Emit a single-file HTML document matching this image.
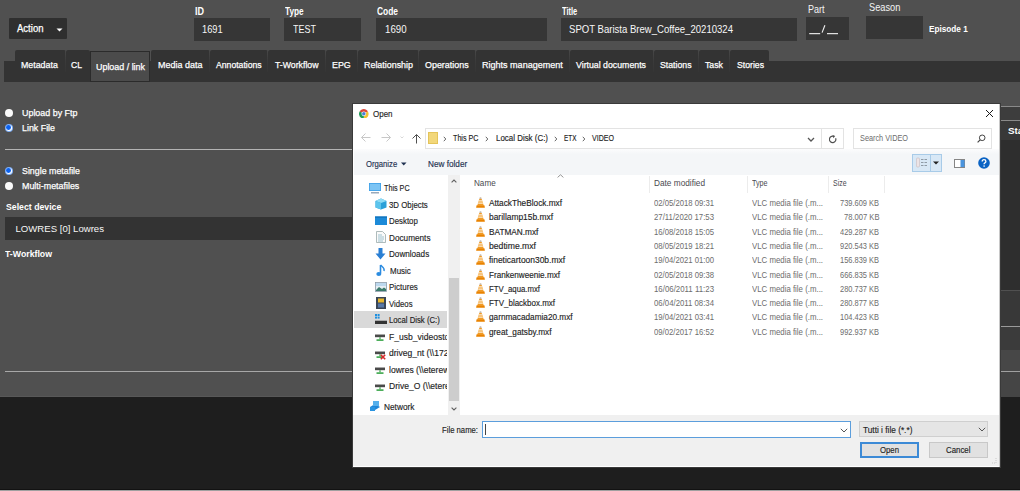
<!DOCTYPE html>
<html><head><meta charset="utf-8"><style>
html,body{margin:0;padding:0;width:1020px;height:491px;overflow:hidden;background:#505050}
body>div,body>svg,body div,body svg{position:absolute}
.t{white-space:pre;font-family:"Liberation Sans",sans-serif;transform-origin:0 0}
</style></head><body>
<div style="left:0px;top:0px;width:1020px;height:397px;background:#505050"></div>
<div style="left:0px;top:397px;width:1020px;height:94px;background:#1e1e1e"></div>
<div style="left:0px;top:396px;width:353px;height:1px;background:#585858"></div>
<div style="left:0px;top:489px;width:1020px;height:1px;background:#121212"></div>
<div style="left:0px;top:490px;width:1020px;height:1px;background:#a0a0a0"></div>
<div style="left:9px;top:18px;width:58px;height:21px;background:#2f2f2f;border-radius:1px"></div>
<div class="t" style="left:16.50px;top:24.00px;font-size:10.2px;line-height:10.2px;font-weight:400;color:#fff;transform:scaleX(0.9355);-webkit-text-stroke:0.25px #fff;">Action</div>
<svg style="left:56px;top:28px" width="7" height="4"><path d="M0.5 0.5H6.5L3.5 3.5Z" fill="#fff"/></svg>
<div style="left:194px;top:18px;width:76px;height:23px;background:#363636"></div>
<div class="t" style="left:194.50px;top:7.00px;font-size:10.2px;line-height:10.2px;font-weight:700;color:#fff;transform:scaleX(0.8834);">ID</div>
<div class="t" style="left:202.00px;top:25.00px;font-size:10.2px;line-height:10.2px;font-weight:400;color:#f6f6f6;transform:scaleX(0.9130);">1691</div>
<div style="left:284px;top:18px;width:77px;height:23px;background:#363636"></div>
<div class="t" style="left:284.50px;top:7.00px;font-size:10.2px;line-height:10.2px;font-weight:700;color:#fff;transform:scaleX(0.8076);">Type</div>
<div class="t" style="left:293.30px;top:25.00px;font-size:10.2px;line-height:10.2px;font-weight:400;color:#f6f6f6;transform:scaleX(0.8830);">TEST</div>
<div style="left:376px;top:18px;width:171px;height:23px;background:#363636"></div>
<div class="t" style="left:376.50px;top:7.00px;font-size:10.2px;line-height:10.2px;font-weight:700;color:#fff;transform:scaleX(0.8245);">Code</div>
<div class="t" style="left:384.70px;top:25.00px;font-size:10.2px;line-height:10.2px;font-weight:400;color:#f6f6f6;transform:scaleX(0.9527);">1690</div>
<div style="left:561px;top:18px;width:236px;height:23px;background:#363636"></div>
<div class="t" style="left:561.50px;top:7.00px;font-size:10.2px;line-height:10.2px;font-weight:700;color:#fff;transform:scaleX(0.7368);">Title</div>
<div class="t" style="left:569.20px;top:25.00px;font-size:10.2px;line-height:10.2px;font-weight:400;color:#f6f6f6;transform:scaleX(0.9392);">SPOT Barista Brew_Coffee_20210324</div>
<div style="left:806px;top:17px;width:43px;height:23px;background:#363636"></div>
<div class="t" style="left:807.50px;top:5.00px;font-size:10.2px;line-height:10.2px;font-weight:400;color:#f4f4f4;transform:scaleX(0.8829);">Part</div>
<svg style="left:808px;top:24px" width="32" height="12"><rect x="1.2" y="9.1" width="11" height="1.1" fill="#f2f2f2"/><rect x="19" y="9.1" width="11" height="1.1" fill="#f2f2f2"/><path d="M14.1 8.6L16.9 1.2" stroke="#f2f2f2" stroke-width="1.1"/></svg>
<div style="left:866px;top:16px;width:57px;height:23px;background:#363636"></div>
<div class="t" style="left:868.60px;top:3.00px;font-size:10.2px;line-height:10.2px;font-weight:400;color:#f4f4f4;transform:scaleX(0.9085);">Season</div>
<div class="t" style="left:929.00px;top:24.00px;font-size:9.4px;line-height:9.4px;font-weight:700;color:#fff;transform:scaleX(0.8759);">Episode 1</div>
<div style="left:4px;top:61px;width:1016px;height:21px;background:#333"></div>
<div style="left:15px;top:50px;width:51px;height:32px;background:#333;border-radius:2px 2px 0 0"></div>
<div style="left:65px;top:50px;width:1px;height:22px;background:linear-gradient(#484848,#3a3a3a 50%,#353535)"></div>
<div class="t" style="left:21.00px;top:60.00px;font-size:9.6px;line-height:9.6px;font-weight:400;color:#fff;transform:scaleX(0.9196);-webkit-text-stroke:0.25px #fff;">Metadata</div>
<div style="left:66px;top:50px;width:24px;height:32px;background:#333;border-radius:2px 2px 0 0"></div>
<div class="t" style="left:71.00px;top:60.00px;font-size:9.6px;line-height:9.6px;font-weight:400;color:#fff;transform:scaleX(0.8968);-webkit-text-stroke:0.25px #fff;">CL</div>
<div style="left:90px;top:51px;width:60px;height:31px;background:#4b4b4b;box-sizing:border-box;border:1px solid #2b2b2b;border-bottom-width:1.5px"></div>
<div class="t" style="left:95.50px;top:62.00px;font-size:9.6px;line-height:9.6px;font-weight:400;color:#fff;transform:scaleX(0.9281);-webkit-text-stroke:0.25px #fff;">Upload / link</div>
<div style="left:151px;top:50px;width:59px;height:32px;background:#333;border-radius:2px 2px 0 0"></div>
<div style="left:209px;top:50px;width:1px;height:22px;background:linear-gradient(#484848,#3a3a3a 50%,#353535)"></div>
<div class="t" style="left:157.60px;top:60.00px;font-size:9.6px;line-height:9.6px;font-weight:400;color:#fff;transform:scaleX(0.9354);-webkit-text-stroke:0.25px #fff;">Media data</div>
<div style="left:210px;top:50px;width:58px;height:32px;background:#333;border-radius:2px 2px 0 0"></div>
<div style="left:267px;top:50px;width:1px;height:22px;background:linear-gradient(#484848,#3a3a3a 50%,#353535)"></div>
<div class="t" style="left:215.50px;top:60.00px;font-size:9.6px;line-height:9.6px;font-weight:400;color:#fff;transform:scaleX(0.9019);-webkit-text-stroke:0.25px #fff;">Annotations</div>
<div style="left:268px;top:50px;width:58px;height:32px;background:#333;border-radius:2px 2px 0 0"></div>
<div style="left:325px;top:50px;width:1px;height:22px;background:linear-gradient(#484848,#3a3a3a 50%,#353535)"></div>
<div class="t" style="left:274.90px;top:60.00px;font-size:9.6px;line-height:9.6px;font-weight:400;color:#fff;transform:scaleX(0.9101);-webkit-text-stroke:0.25px #fff;">T-Workflow</div>
<div style="left:326px;top:50px;width:32px;height:32px;background:#333;border-radius:2px 2px 0 0"></div>
<div style="left:357px;top:50px;width:1px;height:22px;background:linear-gradient(#484848,#3a3a3a 50%,#353535)"></div>
<div class="t" style="left:331.80px;top:60.00px;font-size:9.6px;line-height:9.6px;font-weight:400;color:#fff;transform:scaleX(0.9277);-webkit-text-stroke:0.25px #fff;">EPG</div>
<div style="left:358px;top:50px;width:61px;height:32px;background:#333;border-radius:2px 2px 0 0"></div>
<div style="left:418px;top:50px;width:1px;height:22px;background:linear-gradient(#484848,#3a3a3a 50%,#353535)"></div>
<div class="t" style="left:363.60px;top:60.00px;font-size:9.6px;line-height:9.6px;font-weight:400;color:#fff;transform:scaleX(0.9278);-webkit-text-stroke:0.25px #fff;">Relationship</div>
<div style="left:419px;top:50px;width:57px;height:32px;background:#333;border-radius:2px 2px 0 0"></div>
<div style="left:475px;top:50px;width:1px;height:22px;background:linear-gradient(#484848,#3a3a3a 50%,#353535)"></div>
<div class="t" style="left:425.40px;top:60.00px;font-size:9.6px;line-height:9.6px;font-weight:400;color:#fff;transform:scaleX(0.9289);-webkit-text-stroke:0.25px #fff;">Operations</div>
<div style="left:476px;top:50px;width:94px;height:32px;background:#333;border-radius:2px 2px 0 0"></div>
<div style="left:569px;top:50px;width:1px;height:22px;background:linear-gradient(#484848,#3a3a3a 50%,#353535)"></div>
<div class="t" style="left:481.80px;top:60.00px;font-size:9.6px;line-height:9.6px;font-weight:400;color:#fff;transform:scaleX(0.9411);-webkit-text-stroke:0.25px #fff;">Rights management</div>
<div style="left:570px;top:50px;width:84px;height:32px;background:#333;border-radius:2px 2px 0 0"></div>
<div style="left:653px;top:50px;width:1px;height:22px;background:linear-gradient(#484848,#3a3a3a 50%,#353535)"></div>
<div class="t" style="left:576.00px;top:60.00px;font-size:9.6px;line-height:9.6px;font-weight:400;color:#fff;transform:scaleX(0.9135);-webkit-text-stroke:0.25px #fff;">Virtual documents</div>
<div style="left:654px;top:50px;width:45px;height:32px;background:#333;border-radius:2px 2px 0 0"></div>
<div style="left:698px;top:50px;width:1px;height:22px;background:linear-gradient(#484848,#3a3a3a 50%,#353535)"></div>
<div class="t" style="left:660.00px;top:60.00px;font-size:9.6px;line-height:9.6px;font-weight:400;color:#fff;transform:scaleX(0.9114);-webkit-text-stroke:0.25px #fff;">Stations</div>
<div style="left:699px;top:50px;width:31px;height:32px;background:#333;border-radius:2px 2px 0 0"></div>
<div style="left:729px;top:50px;width:1px;height:22px;background:linear-gradient(#484848,#3a3a3a 50%,#353535)"></div>
<div class="t" style="left:705.00px;top:60.00px;font-size:9.6px;line-height:9.6px;font-weight:400;color:#fff;transform:scaleX(0.9121);-webkit-text-stroke:0.25px #fff;">Task</div>
<div style="left:730px;top:50px;width:39px;height:32px;background:#333;border-radius:2px 2px 0 0"></div>
<div class="t" style="left:736.50px;top:60.00px;font-size:9.6px;line-height:9.6px;font-weight:400;color:#fff;transform:scaleX(0.9042);-webkit-text-stroke:0.25px #fff;">Stories</div>
<div style="left:4.700000000000001px;top:108.5px;width:8.2px;height:8.2px;border-radius:50%;background:#fafafa"></div>
<div class="t" style="left:22.40px;top:109.00px;font-size:9.2px;line-height:9.2px;font-weight:400;color:#fff;transform:scaleX(0.9702);-webkit-text-stroke:0.25px #fff;">Upload by Ftp</div>
<div style="left:4.700000000000001px;top:123.7px;width:8.2px;height:8.2px;border-radius:50%;background:#7fb0f8"></div>
<div style="left:5.500000000000001px;top:124.5px;width:6.6px;height:6.6px;border-radius:50%;background:#fff"></div>
<div style="left:6.4px;top:125.39999999999999px;width:4.8px;height:4.8px;border-radius:50%;background:#0b62f0"></div>
<div class="t" style="left:22.40px;top:124.00px;font-size:9.2px;line-height:9.2px;font-weight:400;color:#fff;transform:scaleX(0.9644);-webkit-text-stroke:0.25px #fff;">Link File</div>
<div style="left:5px;top:149px;width:348px;height:1px;background:#b4b4b4"></div>
<div style="left:4.700000000000001px;top:166.70000000000002px;width:8.2px;height:8.2px;border-radius:50%;background:#7fb0f8"></div>
<div style="left:5.500000000000001px;top:167.5px;width:6.6px;height:6.6px;border-radius:50%;background:#fff"></div>
<div style="left:6.4px;top:168.4px;width:4.8px;height:4.8px;border-radius:50%;background:#0b62f0"></div>
<div class="t" style="left:22.40px;top:167.00px;font-size:9.2px;line-height:9.2px;font-weight:400;color:#fff;transform:scaleX(0.9624);-webkit-text-stroke:0.25px #fff;">Single metafile</div>
<div style="left:4.700000000000001px;top:181.8px;width:8.2px;height:8.2px;border-radius:50%;background:#fafafa"></div>
<div class="t" style="left:22.40px;top:182.00px;font-size:9.2px;line-height:9.2px;font-weight:400;color:#fff;transform:scaleX(0.9673);-webkit-text-stroke:0.25px #fff;">Multi-metafiles</div>
<div class="t" style="left:5.50px;top:203.00px;font-size:9.2px;line-height:9.2px;font-weight:700;color:#fff;transform:scaleX(0.9496);">Select device</div>
<div style="left:5px;top:217px;width:348px;height:23px;background:#333"></div>
<div class="t" style="left:15.50px;top:224.00px;font-size:9.6px;line-height:9.6px;font-weight:400;color:#f6f6f6;">LOWRES [0] Lowres</div>
<div class="t" style="left:5.00px;top:250.00px;font-size:9.2px;line-height:9.2px;font-weight:700;color:#fff;transform:scaleX(0.9525);">T-Workflow</div>
<div style="left:5px;top:371px;width:348px;height:1px;background:#a8a8a8"></div>
<div style="left:990px;top:106px;width:30px;height:1px;background:#8a8a8a"></div>
<div style="left:990px;top:107px;width:30px;height:14px;background:#3d3d3d"></div>
<div style="left:990px;top:120px;width:30px;height:1px;background:#8a8a8a"></div>
<div style="left:990px;top:121px;width:30px;height:19px;background:#383838"></div>
<div class="t" style="left:1008.00px;top:127.00px;font-size:8.6px;line-height:8.6px;font-weight:700;color:#fff;transform:scaleX(1.1422);">Status</div>
<div style="left:990px;top:140px;width:30px;height:150px;background:#2e2e2e"></div>
<div style="left:990px;top:290px;width:30px;height:1px;background:#505050"></div>
<div style="left:990px;top:291px;width:30px;height:35px;background:#383838"></div>
<div style="left:990px;top:326px;width:30px;height:1px;background:#9a9a9a"></div>
<div style="left:990px;top:327px;width:30px;height:23px;background:#3b3b3b"></div>
<div style="left:990px;top:350px;width:30px;height:21px;background:#474747"></div>
<div style="left:990px;top:371px;width:30px;height:1px;background:#a0a0a0"></div>
<div style="left:990px;top:372px;width:30px;height:25px;background:#454545"></div>
<div style="left:353px;top:104px;width:647px;height:363px;background:#fff;box-shadow:0 0 0 1px #3a3a3a"></div>
<div style="left:999px;top:104px;width:1px;height:363px;background:#c8c8c8"></div>
<svg style="left:359px;top:108.8px" width="9.6" height="9.6" viewBox="0 0 20 20"><path d="M10 10L1.34 5A10 10 0 0 1 18.66 5Z" fill="#d9483b"/><path d="M10 10L18.66 5A10 10 0 0 1 10 20Z" fill="#f2c232"/><path d="M10 10L10 20A10 10 0 0 1 1.34 5Z" fill="#1f9a56"/><circle cx="10" cy="10" r="4.8" fill="#fff"/><circle cx="10" cy="10" r="3.7" fill="#4a7fd6"/></svg>
<div class="t" style="left:372.80px;top:110.00px;font-size:9px;line-height:9px;font-weight:400;color:#1e1e1e;transform:scaleX(0.8851);-webkit-text-stroke:0.15px #1e1e1e;">Open</div>
<svg style="left:986px;top:110px" width="7" height="7"><path d="M0 0L7 7M7 0L0 7" stroke="#1a1a1a" stroke-width="1"/></svg>
<svg style="left:361px;top:133px" width="10" height="9"><path d="M0.5 4.5H9.5M4.5 0.5L0.5 4.5L4.5 8.5" stroke="#c8c8c8" fill="none" stroke-width="1"/></svg>
<svg style="left:381px;top:133px" width="10" height="9"><path d="M0.5 4.5H9.5M5.5 0.5L9.5 4.5L5.5 8.5" stroke="#c8c8c8" fill="none" stroke-width="1"/></svg>
<svg style="left:400px;top:136px" width="4" height="3"><path d="M0.5 0.5L2 2L3.5 0.5" stroke="#d8d8d8" fill="none"/></svg>
<svg style="left:412px;top:134px" width="9" height="10"><path d="M4.5 9.5V0.8M0.5 4.5L4.5 0.5L8.5 4.5" stroke="#505050" fill="none" stroke-width="1"/></svg>
<div style="left:425px;top:128px;width:419px;height:21px;box-sizing:border-box;border:1px solid #e3e3e3;background:#fff"></div>
<div style="left:821px;top:129px;width:1px;height:19px;background:#e3e3e3"></div>
<svg style="left:428px;top:132px" width="10" height="12"><rect x="0.5" y="0.5" width="9" height="11" fill="#f2d77a" stroke="#e4c45a"/></svg>
<svg style="left:443.0px;top:136px" width="4" height="6"><path d="M0.8 0.8L2.8 3L0.8 5.2" stroke="#555" fill="none" stroke-width="0.9"/></svg>
<svg style="left:485.0px;top:136px" width="4" height="6"><path d="M0.8 0.8L2.8 3L0.8 5.2" stroke="#555" fill="none" stroke-width="0.9"/></svg>
<svg style="left:553.8px;top:136px" width="4" height="6"><path d="M0.8 0.8L2.8 3L0.8 5.2" stroke="#555" fill="none" stroke-width="0.9"/></svg>
<svg style="left:581.5px;top:136px" width="4" height="6"><path d="M0.8 0.8L2.8 3L0.8 5.2" stroke="#555" fill="none" stroke-width="0.9"/></svg>
<div class="t" style="left:453.30px;top:134.00px;font-size:9px;line-height:9px;font-weight:400;color:#1e1e1e;transform:scaleX(0.7965);-webkit-text-stroke:0.15px #1e1e1e;">This PC</div>
<div class="t" style="left:495.50px;top:134.00px;font-size:9px;line-height:9px;font-weight:400;color:#1e1e1e;transform:scaleX(0.8811);-webkit-text-stroke:0.15px #1e1e1e;">Local Disk (C:)</div>
<div class="t" style="left:563.50px;top:134.00px;font-size:9px;line-height:9px;font-weight:400;color:#1e1e1e;transform:scaleX(0.7079);-webkit-text-stroke:0.15px #1e1e1e;">ETX</div>
<div class="t" style="left:592.00px;top:134.00px;font-size:9px;line-height:9px;font-weight:400;color:#1e1e1e;transform:scaleX(0.7853);-webkit-text-stroke:0.15px #1e1e1e;">VIDEO</div>
<svg style="left:807px;top:136.5px" width="8" height="5"><path d="M1 1L4 4L7 1" stroke="#555" fill="none" stroke-width="1.3"/></svg>
<svg style="left:829px;top:134.5px" width="9" height="9"><path d="M6.6 3.2A3.2 3.2 0 1 1 4.5 1.3" stroke="#505050" fill="none" stroke-width="1.2"/><path d="M3.6 0L6.2 1.1L4.4 3.2Z" fill="#505050"/></svg>
<div style="left:853px;top:128px;width:139px;height:21px;box-sizing:border-box;border:1px solid #e3e3e3;background:#fff"></div>
<div class="t" style="left:859.80px;top:134.00px;font-size:9px;line-height:9px;font-weight:400;color:#6d6d6d;transform:scaleX(0.8131);">Search VIDEO</div>
<svg style="left:977px;top:134px" width="9" height="9"><circle cx="5.2" cy="3.8" r="2.8" stroke="#444" fill="none" stroke-width="1"/><path d="M3.2 5.8L0.6 8.4" stroke="#444" stroke-width="1.2"/></svg>
<div style="left:354px;top:149px;width:645px;height:26px;background:linear-gradient(#fcfcfd,#f4f6f8 20%,#f4f6f8)"></div>
<div class="t" style="left:365.80px;top:160.00px;font-size:9px;line-height:9px;font-weight:400;color:#1e3050;transform:scaleX(0.8541);-webkit-text-stroke:0.15px #1e3050;">Organize</div>
<svg style="left:401px;top:161.5px" width="6" height="4"><path d="M0 0.5H5.5L2.75 3.5Z" fill="#1e3050"/></svg>
<div class="t" style="left:427.80px;top:160.00px;font-size:9px;line-height:9px;font-weight:400;color:#1e3050;transform:scaleX(0.9110);-webkit-text-stroke:0.15px #1e3050;">New folder</div>
<div style="left:912px;top:154px;width:30px;height:18px;box-sizing:border-box;border:1px solid #a8cbe8;background:#d8e8f6"></div>
<div style="left:930px;top:155px;width:1px;height:16px;background:#a8cbe8"></div>
<svg style="left:916px;top:157px" width="12" height="11"><rect x="0.5" y="1" width="3" height="9" rx="1" fill="#ece4e6" stroke="#cbbcc0" stroke-width="0.6"/><path d="M5 2.5H7.5M8.5 2.5H11M5 5.5H7.5M8.5 5.5H11M5 8.5H7.5M8.5 8.5H11" stroke="#8f9ba6" stroke-width="1"/></svg>
<svg style="left:933px;top:161px" width="6" height="4"><path d="M0 0.5H6L3 3.5Z" fill="#222"/></svg>
<svg style="left:954px;top:159px" width="11" height="9"><rect x="0.5" y="0.5" width="10" height="8" fill="#fff" stroke="#858585"/><rect x="6.5" y="1" width="4" height="7" fill="#4a94de"/></svg>
<svg style="left:978px;top:157px" width="12" height="12" viewBox="0 0 12 12"><circle cx="6" cy="6" r="5.8" fill="#0a63c4"/><path d="M4.2 4.6C4.2 3.4 5 2.7 6 2.7C7.1 2.7 7.9 3.4 7.9 4.4C7.9 5.5 6.5 5.7 6.1 6.7V7.3" stroke="#fff" stroke-width="1.3" fill="none"/><circle cx="6.1" cy="9.1" r="0.8" fill="#fff"/></svg>
<div style="left:448px;top:175px;width:12px;height:240px;background:#f0f0f0"></div>
<div style="left:449px;top:278px;width:10px;height:123px;background:#cdcdcd"></div>
<svg style="left:451px;top:178.5px" width="6" height="4"><path d="M0.6 3.4L3 1L5.4 3.4" stroke="#606060" fill="none" stroke-width="1.1"/></svg>
<svg style="left:451px;top:407px" width="6" height="4"><path d="M0.6 0.6L3 3L5.4 0.6" stroke="#606060" fill="none" stroke-width="1.1"/></svg>
<div style="left:354px;top:311px;width:93px;height:17px;background:#d9d9d9"></div>
<div class="t" style="left:384.40px;top:184.00px;font-size:9px;line-height:9px;font-weight:400;color:#1e1e1e;transform:scaleX(0.7996);-webkit-text-stroke:0.15px #1e1e1e;">This PC</div>
<svg style="left:369px;top:182.5px" width="12" height="11"><rect x="0" y="0" width="12" height="8" fill="#3ea0e8"/><rect x="0.8" y="0.8" width="10.4" height="6.4" fill="#7cc4f4"/><rect x="2" y="9" width="8" height="1.5" fill="#9ab"/></svg>
<div class="t" style="left:389.20px;top:201.00px;font-size:9px;line-height:9px;font-weight:400;color:#1e1e1e;transform:scaleX(0.8713);-webkit-text-stroke:0.15px #1e1e1e;">3D Objects</div>
<svg style="left:374.5px;top:198.3px" width="12" height="12"><path d="M6 0.5L11.5 3V9.5L6 11.5L0.5 9.5V3Z" fill="#2aa0d8"/><path d="M6 0.5L11.5 3L6 5L0.5 3Z" fill="#8fdcf5"/><path d="M6 5V11.5L0.5 9.5V3Z" fill="#5cc4ec"/></svg>
<div class="t" style="left:389.20px;top:217.00px;font-size:9px;line-height:9px;font-weight:400;color:#1e1e1e;transform:scaleX(0.8719);-webkit-text-stroke:0.15px #1e1e1e;">Desktop</div>
<svg style="left:374.5px;top:215.7px" width="12" height="10"><rect x="0" y="0.5" width="12" height="8.5" fill="#1c8ad8"/><rect x="0" y="0.5" width="12" height="1.2" fill="#0f6fb8"/></svg>
<div class="t" style="left:389.20px;top:234.00px;font-size:9px;line-height:9px;font-weight:400;color:#1e1e1e;transform:scaleX(0.9115);-webkit-text-stroke:0.15px #1e1e1e;">Documents</div>
<svg style="left:375.5px;top:231.1px" width="10" height="12"><path d="M0.5 0.5H6.5L9.5 3.5V11.5H0.5Z" fill="#fafafa" stroke="#9aa" stroke-width="0.8"/><path d="M2 4H6M2 6H8M2 8H8M2 10H7" stroke="#7ab" stroke-width="0.7"/></svg>
<div class="t" style="left:389.20px;top:250.00px;font-size:9px;line-height:9px;font-weight:400;color:#1e1e1e;transform:scaleX(0.9027);-webkit-text-stroke:0.15px #1e1e1e;">Downloads</div>
<svg style="left:375.0px;top:247.5px" width="11" height="12"><path d="M3.5 0H7.5V5.5H10.5L5.5 11.5L0.5 5.5H3.5Z" fill="#2a7fd4"/></svg>
<div class="t" style="left:389.50px;top:267.00px;font-size:9px;line-height:9px;font-weight:400;color:#1e1e1e;transform:scaleX(0.8845);-webkit-text-stroke:0.15px #1e1e1e;">Music</div>
<svg style="left:375.5px;top:263.5px" width="10" height="13"><path d="M4.5 1V9.5" stroke="#2a8be0" stroke-width="1.6"/><path d="M4.5 1C6 3 9 3.5 8 7" stroke="#2a8be0" stroke-width="1.4" fill="none"/><ellipse cx="2.8" cy="10" rx="2.5" ry="2" fill="#2a8be0"/></svg>
<div class="t" style="left:389.20px;top:283.00px;font-size:9px;line-height:9px;font-weight:400;color:#1e1e1e;transform:scaleX(0.8857);-webkit-text-stroke:0.15px #1e1e1e;">Pictures</div>
<svg style="left:374.5px;top:281.5px" width="12" height="10"><rect x="0.5" y="0.5" width="11" height="9" fill="#e6eef4" stroke="#8a9aa8" stroke-width="0.8"/><path d="M1 8L4 5L7 7L9 5.5L11 7V9H1Z" fill="#3a7a6a"/><rect x="1" y="1" width="10" height="3" fill="#bcd8ee"/></svg>
<div class="t" style="left:389.20px;top:300.00px;font-size:9px;line-height:9px;font-weight:400;color:#1e1e1e;transform:scaleX(0.8589);-webkit-text-stroke:0.15px #1e1e1e;">Videos</div>
<svg style="left:375.5px;top:297.1px" width="10" height="12"><rect x="0" y="0" width="10" height="12" fill="#3a4656"/><rect x="2" y="1.5" width="6" height="4" fill="#e8b830"/><rect x="2" y="6.5" width="6" height="4" fill="#5878a8"/></svg>
<div class="t" style="left:389.20px;top:316.00px;font-size:9px;line-height:9px;font-weight:400;color:#1e1e1e;transform:scaleX(0.8608);-webkit-text-stroke:0.15px #1e1e1e;">Local Disk (C:)</div>
<svg style="left:374.5px;top:314.3px" width="12" height="11"><rect x="0" y="0" width="2" height="2" fill="#1e90e0"/><rect x="2.6" y="0" width="2" height="2" fill="#1e90e0"/><rect x="0" y="2.6" width="2" height="2" fill="#1e90e0"/><rect x="2.6" y="2.6" width="2" height="2" fill="#1e90e0"/><rect x="0" y="7" width="12" height="3" fill="#333"/><rect x="0" y="6" width="12" height="1" fill="#aaa"/></svg>
<div class="t" style="left:389.20px;top:333.00px;font-size:9px;line-height:9px;font-weight:400;color:#1e1e1e;transform:scaleX(0.9500);-webkit-text-stroke:0.15px #1e1e1e;width:60.84px;overflow:hidden;">F_usb_videostorage</div>
<svg style="left:375.3px;top:334.1px" width="10" height="8"><rect x="0" y="0" width="10" height="3.2" fill="#4a4a4a"/><rect x="0" y="0" width="10" height="1" fill="#a8a8a8"/><rect x="4.4" y="3.2" width="1.2" height="2.2" fill="#3aa64a"/><rect x="1.5" y="5.3" width="7" height="1.6" fill="#3aa64a"/></svg>
<div class="t" style="left:389.20px;top:349.00px;font-size:9px;line-height:9px;font-weight:400;color:#1e1e1e;transform:scaleX(0.9500);-webkit-text-stroke:0.15px #1e1e1e;width:60.84px;overflow:hidden;">driveg_nt (\\172.16.1.1)</div>
<svg style="left:375.3px;top:350.7px" width="10" height="8"><rect x="0" y="0" width="10" height="3.2" fill="#4a4a4a"/><rect x="0" y="0" width="10" height="1" fill="#a8a8a8"/><rect x="4.4" y="3.2" width="1.2" height="2.2" fill="#3aa64a"/><rect x="1.5" y="5.3" width="7" height="1.6" fill="#3aa64a"/></svg>
<svg style="left:379.5px;top:353.7px" width="6" height="6"><path d="M0.8 0.8L5.2 5.2M5.2 0.8L0.8 5.2" stroke="#d62a2a" stroke-width="1.6"/></svg>
<div class="t" style="left:389.20px;top:366.00px;font-size:9px;line-height:9px;font-weight:400;color:#1e1e1e;transform:scaleX(0.9500);-webkit-text-stroke:0.15px #1e1e1e;width:60.84px;overflow:hidden;">lowres (\\eterew-nas)</div>
<svg style="left:375.3px;top:367.1px" width="10" height="8"><rect x="0" y="0" width="10" height="3.2" fill="#4a4a4a"/><rect x="0" y="0" width="10" height="1" fill="#a8a8a8"/><rect x="4.4" y="3.2" width="1.2" height="2.2" fill="#3aa64a"/><rect x="1.5" y="5.3" width="7" height="1.6" fill="#3aa64a"/></svg>
<div class="t" style="left:389.20px;top:382.00px;font-size:9px;line-height:9px;font-weight:400;color:#1e1e1e;transform:scaleX(0.9500);-webkit-text-stroke:0.15px #1e1e1e;width:60.84px;overflow:hidden;">Drive_O (\\eterew-nas)</div>
<svg style="left:375.3px;top:383.5px" width="10" height="8"><rect x="0" y="0" width="10" height="3.2" fill="#4a4a4a"/><rect x="0" y="0" width="10" height="1" fill="#a8a8a8"/><rect x="4.4" y="3.2" width="1.2" height="2.2" fill="#3aa64a"/><rect x="1.5" y="5.3" width="7" height="1.6" fill="#3aa64a"/></svg>
<div class="t" style="left:384.00px;top:403.00px;font-size:9px;line-height:9px;font-weight:400;color:#1e1e1e;transform:scaleX(0.9208);-webkit-text-stroke:0.15px #1e1e1e;">Network</div>
<svg style="left:369px;top:400.9px" width="12" height="11"><path d="M1 6L6 3L11 6L6 9Z" fill="#1f86d8"/><rect x="4" y="0" width="6" height="5" fill="#56b0ec"/><rect x="1" y="6" width="5" height="4" fill="#2a94e0"/></svg>
<div class="t" style="left:474.00px;top:179.00px;font-size:9px;line-height:9px;font-weight:400;color:#4a4a50;transform:scaleX(0.9036);">Name</div>
<svg style="left:557px;top:174px" width="7" height="4"><path d="M0.6 3.4L3.5 0.8L6.4 3.4" stroke="#888" fill="none" stroke-width="0.9"/></svg>
<div style="left:649px;top:176px;width:1px;height:17px;background:#ececec"></div>
<div class="t" style="left:653.50px;top:179.00px;font-size:9px;line-height:9px;font-weight:400;color:#4a4a50;transform:scaleX(0.9184);">Date modified</div>
<div style="left:747px;top:176px;width:1px;height:17px;background:#ececec"></div>
<div class="t" style="left:752.00px;top:179.00px;font-size:9px;line-height:9px;font-weight:400;color:#4a4a50;transform:scaleX(0.7942);">Type</div>
<div style="left:828px;top:176px;width:1px;height:17px;background:#ececec"></div>
<div class="t" style="left:833.00px;top:179.00px;font-size:9px;line-height:9px;font-weight:400;color:#4a4a50;transform:scaleX(0.7707);">Size</div>
<div style="left:884px;top:176px;width:1px;height:17px;background:#ececec"></div>
<svg style="left:475.8px;top:197.0px" width="9" height="11" viewBox="0 0 9 11"><path d="M3.8 0.2H5.2L5.7 2H3.3Z" fill="#c9b9a6"/><path d="M3.3 2H5.7L7.7 8.6H1.3Z" fill="#f29b24"/><path d="M3 3.3H6L6.35 4.5H2.65Z" fill="#fbeed8"/><path d="M2.4 5.5H6.6L6.95 6.8H2.05Z" fill="#fbeed8"/><path d="M0.6 8.2H8.4L8.9 10.8H0.1Z" fill="#ea8300"/></svg>
<div class="t" style="left:488.70px;top:199.00px;font-size:9px;line-height:9px;font-weight:400;color:#1e1e1e;transform:scaleX(0.9179);-webkit-text-stroke:0.15px #1e1e1e;">AttackTheBlock.mxf</div>
<div class="t" style="left:653.50px;top:199.00px;font-size:9px;line-height:9px;font-weight:400;color:#6d6d6d;transform:scaleX(0.8562);">02/05/2018 09:31</div>
<div class="t" style="left:752.00px;top:199.00px;font-size:9px;line-height:9px;font-weight:400;color:#6d6d6d;transform:scaleX(0.8708);">VLC media file (.m...</div>
<div class="t" style="left:840.00px;top:199.00px;font-size:9px;line-height:9px;font-weight:400;color:#6d6d6d;transform:scaleX(0.8290);">739.609 KB</div>
<svg style="left:475.8px;top:211.3px" width="9" height="11" viewBox="0 0 9 11"><path d="M3.8 0.2H5.2L5.7 2H3.3Z" fill="#c9b9a6"/><path d="M3.3 2H5.7L7.7 8.6H1.3Z" fill="#f29b24"/><path d="M3 3.3H6L6.35 4.5H2.65Z" fill="#fbeed8"/><path d="M2.4 5.5H6.6L6.95 6.8H2.05Z" fill="#fbeed8"/><path d="M0.6 8.2H8.4L8.9 10.8H0.1Z" fill="#ea8300"/></svg>
<div class="t" style="left:488.70px;top:213.00px;font-size:9px;line-height:9px;font-weight:400;color:#1e1e1e;transform:scaleX(0.9339);-webkit-text-stroke:0.15px #1e1e1e;">barillamp15b.mxf</div>
<div class="t" style="left:653.50px;top:213.00px;font-size:9px;line-height:9px;font-weight:400;color:#6d6d6d;transform:scaleX(0.8645);">27/11/2020 17:53</div>
<div class="t" style="left:752.00px;top:213.00px;font-size:9px;line-height:9px;font-weight:400;color:#6d6d6d;transform:scaleX(0.8708);">VLC media file (.m...</div>
<div class="t" style="left:843.50px;top:213.00px;font-size:9px;line-height:9px;font-weight:400;color:#6d6d6d;transform:scaleX(0.8443);">78.007 KB</div>
<svg style="left:475.8px;top:225.6px" width="9" height="11" viewBox="0 0 9 11"><path d="M3.8 0.2H5.2L5.7 2H3.3Z" fill="#c9b9a6"/><path d="M3.3 2H5.7L7.7 8.6H1.3Z" fill="#f29b24"/><path d="M3 3.3H6L6.35 4.5H2.65Z" fill="#fbeed8"/><path d="M2.4 5.5H6.6L6.95 6.8H2.05Z" fill="#fbeed8"/><path d="M0.6 8.2H8.4L8.9 10.8H0.1Z" fill="#ea8300"/></svg>
<div class="t" style="left:488.70px;top:228.00px;font-size:9px;line-height:9px;font-weight:400;color:#1e1e1e;transform:scaleX(0.9175);-webkit-text-stroke:0.15px #1e1e1e;">BATMAN.mxf</div>
<div class="t" style="left:653.50px;top:228.00px;font-size:9px;line-height:9px;font-weight:400;color:#6d6d6d;transform:scaleX(0.8562);">16/08/2018 15:05</div>
<div class="t" style="left:752.00px;top:228.00px;font-size:9px;line-height:9px;font-weight:400;color:#6d6d6d;transform:scaleX(0.8708);">VLC media file (.m...</div>
<div class="t" style="left:840.00px;top:228.00px;font-size:9px;line-height:9px;font-weight:400;color:#6d6d6d;transform:scaleX(0.8290);">429.287 KB</div>
<svg style="left:475.8px;top:239.9px" width="9" height="11" viewBox="0 0 9 11"><path d="M3.8 0.2H5.2L5.7 2H3.3Z" fill="#c9b9a6"/><path d="M3.3 2H5.7L7.7 8.6H1.3Z" fill="#f29b24"/><path d="M3 3.3H6L6.35 4.5H2.65Z" fill="#fbeed8"/><path d="M2.4 5.5H6.6L6.95 6.8H2.05Z" fill="#fbeed8"/><path d="M0.6 8.2H8.4L8.9 10.8H0.1Z" fill="#ea8300"/></svg>
<div class="t" style="left:488.70px;top:242.00px;font-size:9px;line-height:9px;font-weight:400;color:#1e1e1e;transform:scaleX(0.9586);-webkit-text-stroke:0.15px #1e1e1e;">bedtime.mxf</div>
<div class="t" style="left:653.50px;top:242.00px;font-size:9px;line-height:9px;font-weight:400;color:#6d6d6d;transform:scaleX(0.8562);">08/05/2019 18:21</div>
<div class="t" style="left:752.00px;top:242.00px;font-size:9px;line-height:9px;font-weight:400;color:#6d6d6d;transform:scaleX(0.8708);">VLC media file (.m...</div>
<div class="t" style="left:840.00px;top:242.00px;font-size:9px;line-height:9px;font-weight:400;color:#6d6d6d;transform:scaleX(0.8290);">920.543 KB</div>
<svg style="left:475.8px;top:254.2px" width="9" height="11" viewBox="0 0 9 11"><path d="M3.8 0.2H5.2L5.7 2H3.3Z" fill="#c9b9a6"/><path d="M3.3 2H5.7L7.7 8.6H1.3Z" fill="#f29b24"/><path d="M3 3.3H6L6.35 4.5H2.65Z" fill="#fbeed8"/><path d="M2.4 5.5H6.6L6.95 6.8H2.05Z" fill="#fbeed8"/><path d="M0.6 8.2H8.4L8.9 10.8H0.1Z" fill="#ea8300"/></svg>
<div class="t" style="left:488.70px;top:256.00px;font-size:9px;line-height:9px;font-weight:400;color:#1e1e1e;transform:scaleX(0.9377);-webkit-text-stroke:0.15px #1e1e1e;">fineticartoon30b.mxf</div>
<div class="t" style="left:653.50px;top:256.00px;font-size:9px;line-height:9px;font-weight:400;color:#6d6d6d;transform:scaleX(0.8562);">19/04/2021 01:00</div>
<div class="t" style="left:752.00px;top:256.00px;font-size:9px;line-height:9px;font-weight:400;color:#6d6d6d;transform:scaleX(0.8708);">VLC media file (.m...</div>
<div class="t" style="left:840.00px;top:256.00px;font-size:9px;line-height:9px;font-weight:400;color:#6d6d6d;transform:scaleX(0.8290);">156.839 KB</div>
<svg style="left:475.8px;top:268.5px" width="9" height="11" viewBox="0 0 9 11"><path d="M3.8 0.2H5.2L5.7 2H3.3Z" fill="#c9b9a6"/><path d="M3.3 2H5.7L7.7 8.6H1.3Z" fill="#f29b24"/><path d="M3 3.3H6L6.35 4.5H2.65Z" fill="#fbeed8"/><path d="M2.4 5.5H6.6L6.95 6.8H2.05Z" fill="#fbeed8"/><path d="M0.6 8.2H8.4L8.9 10.8H0.1Z" fill="#ea8300"/></svg>
<div class="t" style="left:488.70px;top:271.00px;font-size:9px;line-height:9px;font-weight:400;color:#1e1e1e;transform:scaleX(0.9039);-webkit-text-stroke:0.15px #1e1e1e;">Frankenweenie.mxf</div>
<div class="t" style="left:653.50px;top:271.00px;font-size:9px;line-height:9px;font-weight:400;color:#6d6d6d;transform:scaleX(0.8562);">02/05/2018 09:38</div>
<div class="t" style="left:752.00px;top:271.00px;font-size:9px;line-height:9px;font-weight:400;color:#6d6d6d;transform:scaleX(0.8708);">VLC media file (.m...</div>
<div class="t" style="left:840.00px;top:271.00px;font-size:9px;line-height:9px;font-weight:400;color:#6d6d6d;transform:scaleX(0.8290);">666.835 KB</div>
<svg style="left:475.8px;top:282.8px" width="9" height="11" viewBox="0 0 9 11"><path d="M3.8 0.2H5.2L5.7 2H3.3Z" fill="#c9b9a6"/><path d="M3.3 2H5.7L7.7 8.6H1.3Z" fill="#f29b24"/><path d="M3 3.3H6L6.35 4.5H2.65Z" fill="#fbeed8"/><path d="M2.4 5.5H6.6L6.95 6.8H2.05Z" fill="#fbeed8"/><path d="M0.6 8.2H8.4L8.9 10.8H0.1Z" fill="#ea8300"/></svg>
<div class="t" style="left:488.70px;top:285.00px;font-size:9px;line-height:9px;font-weight:400;color:#1e1e1e;transform:scaleX(0.8639);-webkit-text-stroke:0.15px #1e1e1e;">FTV_aqua.mxf</div>
<div class="t" style="left:653.50px;top:285.00px;font-size:9px;line-height:9px;font-weight:400;color:#6d6d6d;transform:scaleX(0.8729);">16/06/2011 11:23</div>
<div class="t" style="left:752.00px;top:285.00px;font-size:9px;line-height:9px;font-weight:400;color:#6d6d6d;transform:scaleX(0.8708);">VLC media file (.m...</div>
<div class="t" style="left:840.00px;top:285.00px;font-size:9px;line-height:9px;font-weight:400;color:#6d6d6d;transform:scaleX(0.8290);">280.737 KB</div>
<svg style="left:475.8px;top:297.1px" width="9" height="11" viewBox="0 0 9 11"><path d="M3.8 0.2H5.2L5.7 2H3.3Z" fill="#c9b9a6"/><path d="M3.3 2H5.7L7.7 8.6H1.3Z" fill="#f29b24"/><path d="M3 3.3H6L6.35 4.5H2.65Z" fill="#fbeed8"/><path d="M2.4 5.5H6.6L6.95 6.8H2.05Z" fill="#fbeed8"/><path d="M0.6 8.2H8.4L8.9 10.8H0.1Z" fill="#ea8300"/></svg>
<div class="t" style="left:488.70px;top:299.00px;font-size:9px;line-height:9px;font-weight:400;color:#1e1e1e;transform:scaleX(0.8855);-webkit-text-stroke:0.15px #1e1e1e;">FTV_blackbox.mxf</div>
<div class="t" style="left:653.50px;top:299.00px;font-size:9px;line-height:9px;font-weight:400;color:#6d6d6d;transform:scaleX(0.8645);">06/04/2011 08:34</div>
<div class="t" style="left:752.00px;top:299.00px;font-size:9px;line-height:9px;font-weight:400;color:#6d6d6d;transform:scaleX(0.8708);">VLC media file (.m...</div>
<div class="t" style="left:840.00px;top:299.00px;font-size:9px;line-height:9px;font-weight:400;color:#6d6d6d;transform:scaleX(0.8290);">280.877 KB</div>
<svg style="left:475.8px;top:311.4px" width="9" height="11" viewBox="0 0 9 11"><path d="M3.8 0.2H5.2L5.7 2H3.3Z" fill="#c9b9a6"/><path d="M3.3 2H5.7L7.7 8.6H1.3Z" fill="#f29b24"/><path d="M3 3.3H6L6.35 4.5H2.65Z" fill="#fbeed8"/><path d="M2.4 5.5H6.6L6.95 6.8H2.05Z" fill="#fbeed8"/><path d="M0.6 8.2H8.4L8.9 10.8H0.1Z" fill="#ea8300"/></svg>
<div class="t" style="left:488.70px;top:313.00px;font-size:9px;line-height:9px;font-weight:400;color:#1e1e1e;transform:scaleX(0.9132);-webkit-text-stroke:0.15px #1e1e1e;">garnmacadamia20.mxf</div>
<div class="t" style="left:653.50px;top:313.00px;font-size:9px;line-height:9px;font-weight:400;color:#6d6d6d;transform:scaleX(0.8562);">19/04/2021 03:41</div>
<div class="t" style="left:752.00px;top:313.00px;font-size:9px;line-height:9px;font-weight:400;color:#6d6d6d;transform:scaleX(0.8708);">VLC media file (.m...</div>
<div class="t" style="left:840.00px;top:313.00px;font-size:9px;line-height:9px;font-weight:400;color:#6d6d6d;transform:scaleX(0.8290);">104.423 KB</div>
<svg style="left:475.8px;top:325.70000000000005px" width="9" height="11" viewBox="0 0 9 11"><path d="M3.8 0.2H5.2L5.7 2H3.3Z" fill="#c9b9a6"/><path d="M3.3 2H5.7L7.7 8.6H1.3Z" fill="#f29b24"/><path d="M3 3.3H6L6.35 4.5H2.65Z" fill="#fbeed8"/><path d="M2.4 5.5H6.6L6.95 6.8H2.05Z" fill="#fbeed8"/><path d="M0.6 8.2H8.4L8.9 10.8H0.1Z" fill="#ea8300"/></svg>
<div class="t" style="left:488.70px;top:328.00px;font-size:9px;line-height:9px;font-weight:400;color:#1e1e1e;transform:scaleX(0.9141);-webkit-text-stroke:0.15px #1e1e1e;">great_gatsby.mxf</div>
<div class="t" style="left:653.50px;top:328.00px;font-size:9px;line-height:9px;font-weight:400;color:#6d6d6d;transform:scaleX(0.8562);">09/02/2017 16:52</div>
<div class="t" style="left:752.00px;top:328.00px;font-size:9px;line-height:9px;font-weight:400;color:#6d6d6d;transform:scaleX(0.8708);">VLC media file (.m...</div>
<div class="t" style="left:840.00px;top:328.00px;font-size:9px;line-height:9px;font-weight:400;color:#6d6d6d;transform:scaleX(0.8290);">992.937 KB</div>
<div style="left:353px;top:415px;width:646px;height:51px;background:#f0f0f0"></div>
<div class="t" style="left:442.00px;top:426.00px;font-size:9px;line-height:9px;font-weight:400;color:#1e1e1e;transform:scaleX(0.8565);-webkit-text-stroke:0.15px #1e1e1e;">File name:</div>
<div style="left:482px;top:421px;width:369px;height:17px;box-sizing:border-box;border:1px solid #5c9edc;background:#fff"></div>
<div style="left:485px;top:424px;width:1px;height:11px;background:#444"></div>
<svg style="left:840px;top:428px" width="8" height="5"><path d="M0.8 0.8L4 4L7.2 0.8" stroke="#555" fill="none" stroke-width="1"/></svg>
<div style="left:859px;top:421px;width:129px;height:16px;box-sizing:border-box;border:1px solid #cfcfcf;background:#e5e5e5"></div>
<div class="t" style="left:862.60px;top:426.00px;font-size:9px;line-height:9px;font-weight:400;color:#1e1e1e;transform:scaleX(0.9201);-webkit-text-stroke:0.15px #1e1e1e;">Tutti i file (*.*)</div>
<svg style="left:978px;top:427px" width="8" height="5"><path d="M0.8 0.8L4 4L7.2 0.8" stroke="#555" fill="none" stroke-width="1"/></svg>
<div style="left:860px;top:442px;width:59px;height:16px;box-sizing:border-box;border:2px solid #3c8ad6;background:#e1e1e1"></div>
<div class="t" style="left:879.80px;top:446.00px;font-size:9px;line-height:9px;font-weight:400;color:#1e1e1e;transform:scaleX(0.8624);-webkit-text-stroke:0.15px #1e1e1e;">Open</div>
<div style="left:929px;top:442px;width:59px;height:16px;box-sizing:border-box;border:1px solid #c8c8c8;background:#e1e1e1"></div>
<div class="t" style="left:945.90px;top:446.00px;font-size:9px;line-height:9px;font-weight:400;color:#1e1e1e;transform:scaleX(0.8709);-webkit-text-stroke:0.15px #1e1e1e;">Cancel</div>
<svg style="left:990px;top:457px" width="7" height="7"><path d="M6 1V6H1" stroke="#c8c8c8" stroke-dasharray="1 1" fill="none"/></svg>
</body></html>
